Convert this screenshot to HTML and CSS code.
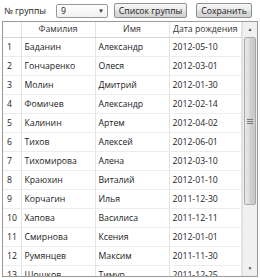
FILE: index.html
```html
<!DOCTYPE html>
<html lang="ru">
<head>
  <meta charset="UTF-8">
  <title>Список группы</title>
  <link rel="stylesheet" href="styles.css">
</head>
<body>
  <!-- Toolbar -->
  <div class="toolbar">
    <span class="label">№ группы</span>
    <div class="combo">
      <span>9</span>
      <span class="arrow">▼</span>
    </div>
    <button class="btn btn-list">Список группы</button>
    <button class="btn btn-save">Сохранить</button>
  </div>

  <!-- Students Grid -->
  <div class="grid">
    <div class="grid-body">
      <table>
        <thead>
          <tr>
            <th class="col-num"></th>
            <th class="col-last">Фамилия</th>
            <th class="col-first">Имя</th>
            <th class="col-date">Дата рождения</th>
          </tr>
        </thead>
        <tbody id="students"></tbody>
      </table>
    </div>
    <div class="scrollbar">
      <div class="scroll-btn">▲</div>
      <div class="scroll-track">
        <div class="scroll-thumb"><span class="grip"></span></div>
      </div>
      <div class="scroll-btn">▼</div>
    </div>
  </div>

  <script>
    // Students of group 9
    const students = [
      ['Баданин', 'Александр', '2012-05-10'],
      ['Гончаренко', 'Олеся', '2012-03-01'],
      ['Молин', 'Дмитрий', '2012-01-30'],
      ['Фомичев', 'Александр', '2012-02-14'],
      ['Калинин', 'Артем', '2012-04-02'],
      ['Тихов', 'Алексей', '2012-06-01'],
      ['Тихомирова', 'Алена', '2012-03-10'],
      ['Краюхин', 'Виталий', '2012-01-10'],
      ['Корчагин', 'Илья', '2011-12-30'],
      ['Хапова', 'Василиса', '2011-12-11'],
      ['Смирнова', 'Ксения', '2012-01-01'],
      ['Румянцев', 'Максим', '2011-11-30'],
      ['Шошков', 'Тимур', '2011-12-25']
    ];

    const body = document.getElementById('students');
    students.forEach((s, i) => {
      const row = document.createElement('tr');
      row.innerHTML = `
        <td class="col-num">${i + 1}</td>
        <td>${s[0]}</td>
        <td>${s[1]}</td>
        <td>${s[2]}</td>
      `;
      body.appendChild(row);
    });
  </script>
</body>
</html>
```

FILE: styles.css
```css
/* Global */
* {
  margin: 0;
  padding: 0;
  box-sizing: border-box;
}

body {
  font-family: 'Open Sans', sans-serif;
  font-size: 8.7px;
  color: #222;
  background: #fff;
  width: 260px;
  height: 278px;
  overflow: hidden;
}

/* Toolbar */
.toolbar {
  display: flex;
  align-items: center;
  height: 21px;
  padding: 0 4px;
}

.label {
  width: 52px;
  white-space: nowrap;
}

.combo {
  display: flex;
  justify-content: space-between;
  align-items: center;
  width: 52px;
  height: 14px;
  padding: 0 3px 0 4px;
  border: 1px solid #999;
  border-radius: 2px;
  background: linear-gradient(#fff, #f0f0f0);
}

.combo .arrow {
  font-size: 6px;
  color: #333;
}

.btn {
  height: 15px;
  padding: 0 3px;
  font-family: inherit;
  font-size: 8.7px;
  white-space: nowrap;
  color: #222;
  border: 1px solid #8e8f8f;
  border-radius: 2px;
  background: linear-gradient(#f6f6f6 0%, #e9e9e9 50%, #dcdcdc 51%, #d4d4d4 100%);
}

.btn-list {
  margin-left: 6px;
  width: 73px;
}

.btn-save {
  margin-left: 9px;
  width: 56px;
}

/* Grid */
.grid {
  display: flex;
  width: 256px;
  height: 256px;
  margin-left: 2px;
  border: 1px solid #9a9a9a;
  overflow: hidden;
}

.grid-body {
  flex: 1;
  overflow: hidden;
}

table {
  width: 100%;
  border-collapse: collapse;
  table-layout: fixed;
}

th {
  height: 15px;
  font-weight: normal;
  text-align: center;
  white-space: nowrap;
  color: #333;
  background: #fff;
  border-right: 1px solid #e2e2e2;
  border-bottom: 1px solid #d5d5d5;
}

td {
  height: 19px;
  padding-left: 3px;
  white-space: nowrap;
  border-right: 1px solid #e4e4e4;
  border-bottom: 1px solid #ececec;
}

.col-num {
  width: 18px;
}

td.col-num {
  padding-left: 4px;
}

.col-last {
  width: 74px;
}

.col-first {
  width: 74px;
}

/* Scrollbar */
.scrollbar {
  display: flex;
  flex-direction: column;
  width: 15px;
  background: #f0f0f0;
  border-left: 1px solid #e0e0e0;
}

.scroll-btn {
  height: 15px;
  font-size: 5px;
  line-height: 15px;
  text-align: center;
  color: #555;
}

.scroll-track {
  flex: 1;
  padding: 0 1px;
}

.scroll-thumb {
  display: flex;
  align-items: center;
  justify-content: center;
  height: 168px;
  border: 1px solid #a9a9a9;
  border-radius: 2px;
  background: linear-gradient(to right, #e8e8e8, #dadada 45%, #cfcfcf 55%, #c8c8c8);
}

.grip {
  width: 6px;
  height: 5px;
  border-top: 1px solid #777;
  border-bottom: 1px solid #777;
  position: relative;
}

.grip::after {
  content: '';
  position: absolute;
  left: 0;
  right: 0;
  top: 1px;
  border-top: 1px solid #777;
}
```
